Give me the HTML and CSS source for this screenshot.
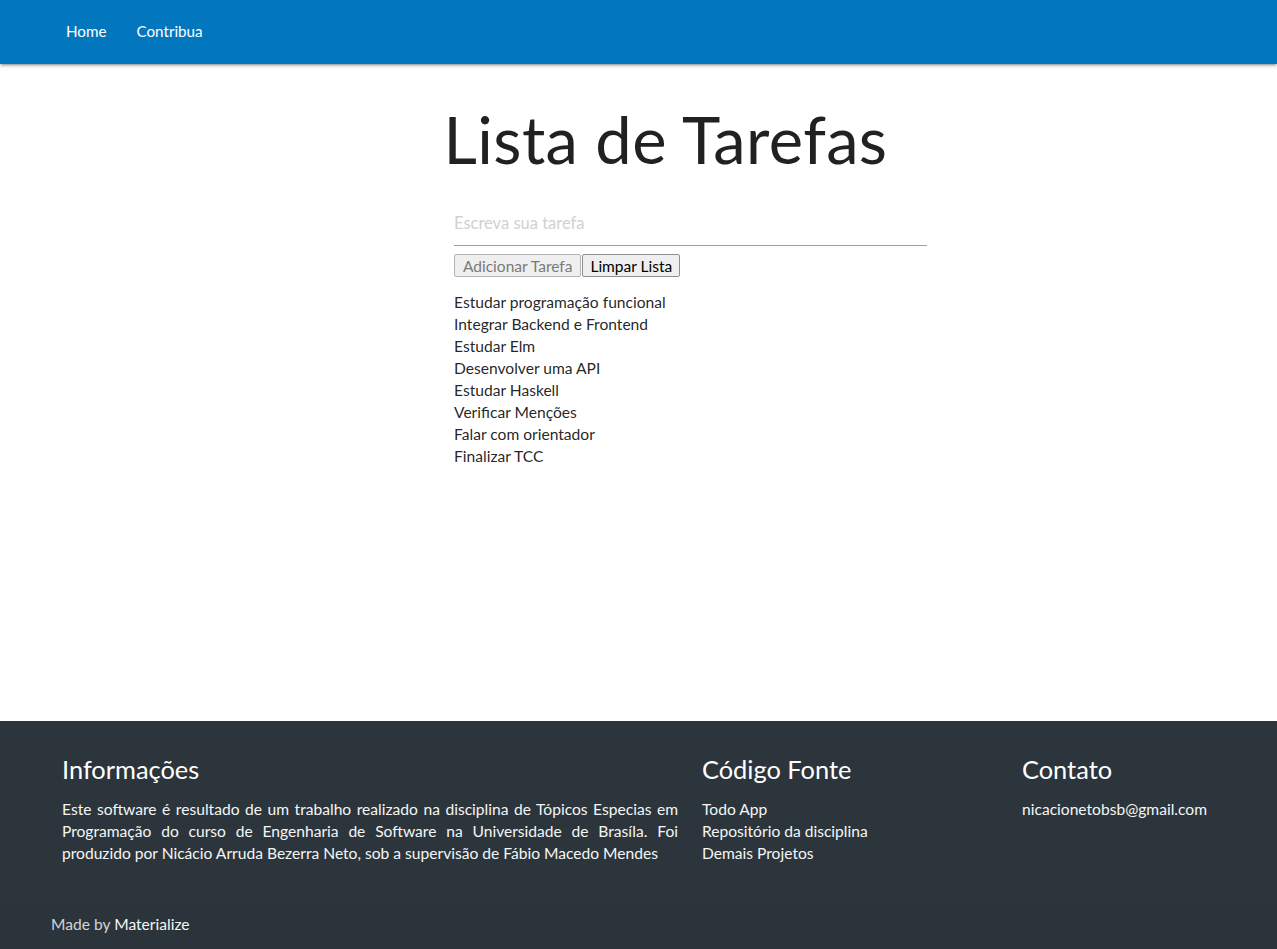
FILE: index.html
```html
<!DOCTYPE html>
<html lang="pt-BR">
<head>
<meta charset="utf-8">
<title>Lista de Tarefas</title>
<link rel="stylesheet" href="styles.css">
</head>
<body>
<nav class="nav">
  <ul class="nav-links">
    <li><a href="#">Home</a></li>
    <li><a href="#">Contribua</a></li>
  </ul>
</nav>
<main class="main">
  <h1 class="title">Lista de Tarefas</h1>
  <div class="todo">
    <input class="task-input" type="text" placeholder="Escreva sua tarefa">
    <div class="buttons">
      <button class="btn btn-disabled" disabled>Adicionar Tarefa</button><button class="btn">Limpar Lista</button>
    </div>
    <ul class="tasks">
      <li>Estudar programação funcional</li>
      <li>Integrar Backend e Frontend</li>
      <li>Estudar Elm</li>
      <li>Desenvolver uma API</li>
      <li>Estudar Haskell</li>
      <li>Verificar Menções</li>
      <li>Falar com orientador</li>
      <li>Finalizar TCC</li>
    </ul>
  </div>
</main>
<footer class="footer">
  <div class="footer-row">
    <div class="footer-col">
      <h5 class="footer-title">Informações</h5>
      <p class="footer-text">Este software é resultado de um trabalho realizado na disciplina de Tópicos Especias em Programação do curso de Engenharia de Software na Universidade de Brasíla. Foi produzido por Nicácio Arruda Bezerra Neto, sob a supervisão de Fábio Macedo Mendes</p>
    </div>
    <div class="footer-col">
      <h5 class="footer-title">Código Fonte</h5>
      <ul class="footer-links">
        <li><a href="#">Todo App</a></li>
        <li><a href="#">Repositório da disciplina</a></li>
        <li><a href="#">Demais Projetos</a></li>
      </ul>
    </div>
    <div class="footer-col">
      <h5 class="footer-title">Contato</h5>
      <ul class="footer-links">
        <li><a href="#">nicacionetobsb@gmail.com</a></li>
      </ul>
    </div>
  </div>
  <div class="footer-copyright">Made by&nbsp;<a href="#" class="copy-link">Materialize</a></div>
</footer>
</body>
</html>
```
FILE: styles.css
```css
* { box-sizing: border-box; }
html, body { margin: 0; padding: 0; }
body {
  font-family: Lato, "Noto Sans", sans-serif;
  font-size: 15.6px;
  line-height: 22px;
  color: rgba(0,0,0,0.87);
  background: #fff;
  min-height: 100vh;
  display: flex;
  flex-direction: column;
}
a { text-decoration: none; color: inherit; }

.nav {
  height: 64px;
  background: #0277bd;
  box-shadow: 0 2px 2px 0 rgba(0,0,0,0.14), 0 3px 1px -2px rgba(0,0,0,0.12), 0 1px 5px 0 rgba(0,0,0,0.2);
  flex: none;
  position: relative;
  z-index: 1;
}
.nav-links {
  list-style: none;
  margin: 0;
  padding: 0 0 0 51px;
  display: flex;
  height: 64px;
}
.nav-links a {
  display: block;
  padding: 0 15px;
  line-height: 62px;
  color: #fff;
  font-size: 15.2px;
}

.main { flex: 1; }
.title {
  margin: 0;
  padding: 31px 0 0 54px;
  text-align: center;
  font-weight: 400;
  font-size: 65px;
  line-height: 88px;
  color: #212121;
  letter-spacing: 0.4px;
}
.todo {
  margin-left: 454px;
  width: 473px;
  padding-top: 17px;
}
.task-input {
  display: block;
  width: 100%;
  height: 46px;
  border: none;
  border-bottom: 1px solid #9e9e9e;
  outline: none;
  background: transparent;
  font-family: inherit;
  font-size: 16.5px;
  padding: 0;
  margin: 0 0 8px 0;
  color: rgba(0,0,0,0.87);
}
.task-input::placeholder { color: #d1d1d1; }
.buttons { display: flex; gap: 1px; }
.btn {
  font-family: inherit;
  font-size: 15.5px;
  height: 23px;
  padding: 0 7px;
  background: #efefef;
  border: 1px solid #8f8f8f;
  border-radius: 2px;
  color: #000;
}
.btn-disabled { color: #7a7a7a; border-color: #b5b5b5; padding: 0 8px; }
.tasks {
  list-style: none;
  margin: 14px 0 0 0;
  padding: 0;
}

.footer {
  flex: none;
  background: #2b353b;
  color: #fff;
  padding-top: 20px;
}
.footer-row {
  display: grid;
  grid-template-columns: 640px 320px 1fr;
  padding-left: 50px;
  margin-bottom: 35px;
}
.footer-col { padding: 0 12px; }
.footer-title {
  margin: 15px 0 10px 0;
  font-size: 25.4px;
  line-height: 27px;
  font-weight: 400;
}
.footer-text {
  margin: 15px 0 0 0;
  text-align: justify;
  color: #f5f5f5;
}
.footer-links {
  list-style: none;
  margin: 15px 0 0 0;
  padding: 0;
  color: #f5f5f5;
}
.footer-copyright {
  height: 50px;
  display: flex;
  align-items: center;
  padding-left: 51px;
  color: rgba(255,255,255,0.8);
  background: rgba(51,51,51,0.08);
}
.copy-link { color: #f5f5f5; }
```
